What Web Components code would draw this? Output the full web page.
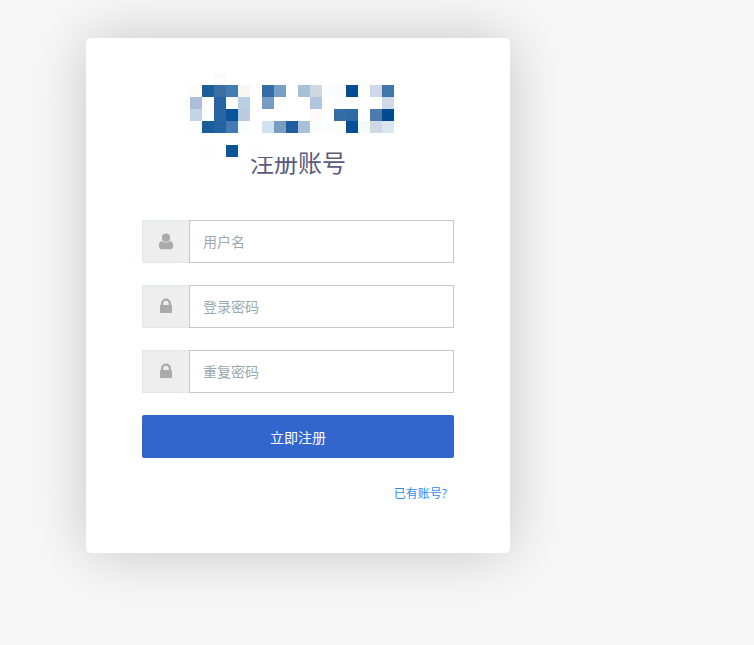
<!DOCTYPE html>
<html lang="zh-CN">
<head>
<meta charset="utf-8">
<meta name="viewport" content="width=device-width, initial-scale=1">
<title>注册账号</title>
<style>
    body {
        box-sizing: border-box;
        min-height: 100vh;
        margin: 0;
        padding: 38px 86px;
        background: #f7f7f7;
        font-family: "Open Sans", "Noto Sans CJK SC", sans-serif;
        font-size: 14px;
    }
</style>
</head>
<body>
<account-card>
    <brand-logo slot="logo"></brand-logo>
    <span slot="title">注册账号</span>
    <register-form></register-form>
    <text-link slot="footer" href="#login">已有账号?</text-link>
</account-card>

<script>
// 根据HTML字符串创建 Shadow DOM
function render(host, html) {
    const template = document.createElement('template');
    template.innerHTML = html;
    const shadow = host.attachShadow({mode: 'open'});
    shadow.appendChild(template.content.cloneNode(true));
    return shadow;
}

// 卡片：logo、标题、内容和底部链接
class AccountCard extends HTMLElement {
    constructor() {
        super();
        render(this, `
            <style>
                :host {
                    display: block;
                    box-sizing: border-box;
                    max-width: 424px;
                    padding: 35px 56px 49px;
                    background: #fff;
                    border-radius: 5px;
                    box-shadow: 0 0 60px rgba(0, 0, 0, .2);
                }
                header {
                    display: flex;
                    flex-direction: column;
                    align-items: center;
                    margin-bottom: 41px;
                }
                h1 {
                    margin: -11px 0 0;
                    color: #5a5a7d;
                    font-size: 24px;
                    font-weight: 400;
                    line-height: 33px;
                }
                footer {
                    display: flex;
                    justify-content: flex-end;
                    margin-top: 26px;
                    padding-right: 7px;
                }
            </style>
            <header>
                <slot name="logo"></slot>
                <h1><slot name="title"></slot></h1>
            </header>
            <slot></slot>
            <footer><slot name="footer"></slot></footer>
        `);
    }
}

// 马赛克 logo，格式为 [行, 列, 颜色]
const CELLS = [
    [0, 2, '#fbfbfd'],
    [1, 0, '#fefcf9'], [1, 1, '#1a5e9c'], [1, 2, '#3a6fa3'], [1, 3, '#447bb0'], [1, 4, '#faf7f3'],
    [1, 6, '#336ca6'], [1, 7, '#789fc3'], [1, 9, '#a7c1d9'], [1, 10, '#cdd8e1'], [1, 11, '#fbfeff'],
    [1, 12, '#fbfafd'], [1, 13, '#034d95'], [1, 14, '#fefef9'], [1, 15, '#ced8e8'], [1, 16, '#4076ac'],
    [2, 0, '#abbcdc'], [2, 2, '#2866a3'], [2, 4, '#b9d0e4'], [2, 6, '#769cc4'], [2, 10, '#b0c6e0'],
    [2, 16, '#d0daea'],
    [3, 0, '#c5d3e6'], [3, 1, '#fafeff'], [3, 2, '#2866a3'], [3, 3, '#0c5499'], [3, 4, '#bccadd'],
    [3, 10, '#fefaf9'], [3, 12, '#326da6'], [3, 13, '#2f6aa4'], [3, 15, '#4c7cae'], [3, 16, '#014a8f'],
    [4, 0, '#fafefe'], [4, 1, '#195e9b'], [4, 2, '#2463a3'], [4, 3, '#447bb2'], [4, 4, '#f9fefe'],
    [4, 6, '#cfe2f2'], [4, 7, '#789dc0'], [4, 8, '#1f5d9d'], [4, 9, '#a8c1d8'], [4, 10, '#fafdf8'],
    [4, 11, '#fafeff'], [4, 12, '#fefdf8'], [4, 13, '#034f98'], [4, 14, '#f4faf8'], [4, 15, '#ced8e7'],
    [4, 16, '#d9e8f0'],
    [6, 1, '#fafeff'], [6, 3, '#0c5498'], [6, 5, '#fefefe'], [6, 6, '#fff'], [6, 7, '#fff'], [6, 8, '#fff']
];

class BrandLogo extends HTMLElement {
    constructor() {
        super();
        const rects = CELLS.map(([row, col, fill]) =>
            `<rect x="${col * 12}" y="${row * 12}" width="12" height="12" fill="${fill}"/>`).join('');
        render(this, `
            <style>
                /* logo 的下边缘压在标题上面 */
                :host {
                    display: block;
                    position: relative;
                    z-index: 1;
                }
                svg {
                    display: block;
                }
            </style>
            <svg width="216" height="84" viewBox="0 0 216 84" shape-rendering="crispEdges" aria-hidden="true">${rects}</svg>
        `);
    }
}

const ICONS = {
    user: '<circle cx="8" cy="4.7" r="4.1"/><path d="M4.300 7.900a4.900 4.900 0 0 0 7.400 0c2.700.1 3.500 2.500 3.500 5.200 0 2-1.200 3.100-2.800 3.100H3.700c-1.600 0-2.800-1.100-2.800-3.100 0-2.700.8-5.100 3.400-5.200z"/>',
    lock: '<path fill-rule="evenodd" d="M3 7V5.500a5 5 0 0 1 10 0V7h.2a.8.8 0 0 1 .8.8v6.400a.8.8 0 0 1-.8.8H2.800a.8.8 0 0 1-.8-.8V7.800a.8.8 0 0 1 .8-.8zM5.300 7h5.400V5.500a2.700 2.700 0 0 0-5.400 0z"/>'
};

// 带图标的输入框
class IconField extends HTMLElement {
    static formAssociated = true;

    constructor() {
        super();
        this.internals = this.attachInternals();
        this.input = render(this, `
            <style>
                :host {
                    display: flex;
                    height: 43px;
                }
                label {
                    display: flex;
                    box-sizing: border-box;
                    flex: none;
                    align-items: center;
                    justify-content: center;
                    width: 47px;
                    background: #eee;
                    border: 1px solid #e2e7e8;
                    border-right: 0;
                }
                svg {
                    fill: #aaa;
                }
                input {
                    box-sizing: border-box;
                    flex: 1;
                    min-width: 0;
                    margin: 0;
                    padding: 0 13px;
                    border: 1px solid #c8c8c8;
                    border-radius: 0;
                    background: #fff;
                    color: #555;
                    font: inherit;
                    outline: none;
                }
                input:focus {
                    border-color: #36c;
                }
                input::placeholder {
                    color: #9ba8ae;
                    opacity: 1;
                }
            </style>
            <label for="control">
                <svg width="16" height="17" viewBox="0 0 16 17" aria-hidden="true"></svg>
            </label>
            <input id="control">
        `).querySelector('input');
        this.input.addEventListener('input', () => {
            this.internals.setFormValue(this.input.value);
        });
    }

    connectedCallback() {
        const text = this.getAttribute('placeholder');
        this.input.type = this.getAttribute('type') || 'text';
        this.input.placeholder = text;
        this.input.setAttribute('aria-label', text);
        this.shadowRoot.querySelector('svg').innerHTML = ICONS[this.getAttribute('icon')];
    }
}

// 注册表单
class RegisterForm extends HTMLElement {
    constructor() {
        super();
        const shadow = render(this, `
            <style>
                :host {
                    display: block;
                }
                form {
                    display: grid;
                    gap: 22px;
                }
                button {
                    height: 43px;
                    padding: 0;
                    border: 0;
                    border-radius: 2px;
                    background: #36c;
                    color: #fff;
                    font: inherit;
                    cursor: pointer;
                }
                button:hover {
                    background: #2d5bb8;
                }
            </style>
            <form>
                <icon-field name="username" icon="user" placeholder="用户名"></icon-field>
                <icon-field name="password" icon="lock" type="password" placeholder="登录密码"></icon-field>
                <icon-field name="repassword" icon="lock" type="password" placeholder="重复密码"></icon-field>
                <button type="submit">立即注册</button>
            </form>
        `);
        shadow.querySelector('form').addEventListener('submit', e => e.preventDefault());
    }
}

class TextLink extends HTMLElement {
    constructor() {
        super();
        render(this, `
            <style>
                :host {
                    display: block;
                    font-size: 12px;
                    line-height: 20px;
                }
                a {
                    color: #2b8cf0;
                    text-decoration: none;
                }
                a:hover {
                    text-decoration: underline;
                }
            </style>
            <a><slot></slot></a>
        `);
    }

    connectedCallback() {
        this.shadowRoot.querySelector('a').href = this.getAttribute('href');
    }
}

customElements.define('account-card', AccountCard);
customElements.define('brand-logo', BrandLogo);
customElements.define('icon-field', IconField);
customElements.define('register-form', RegisterForm);
customElements.define('text-link', TextLink);
</script>
</body>
</html>
